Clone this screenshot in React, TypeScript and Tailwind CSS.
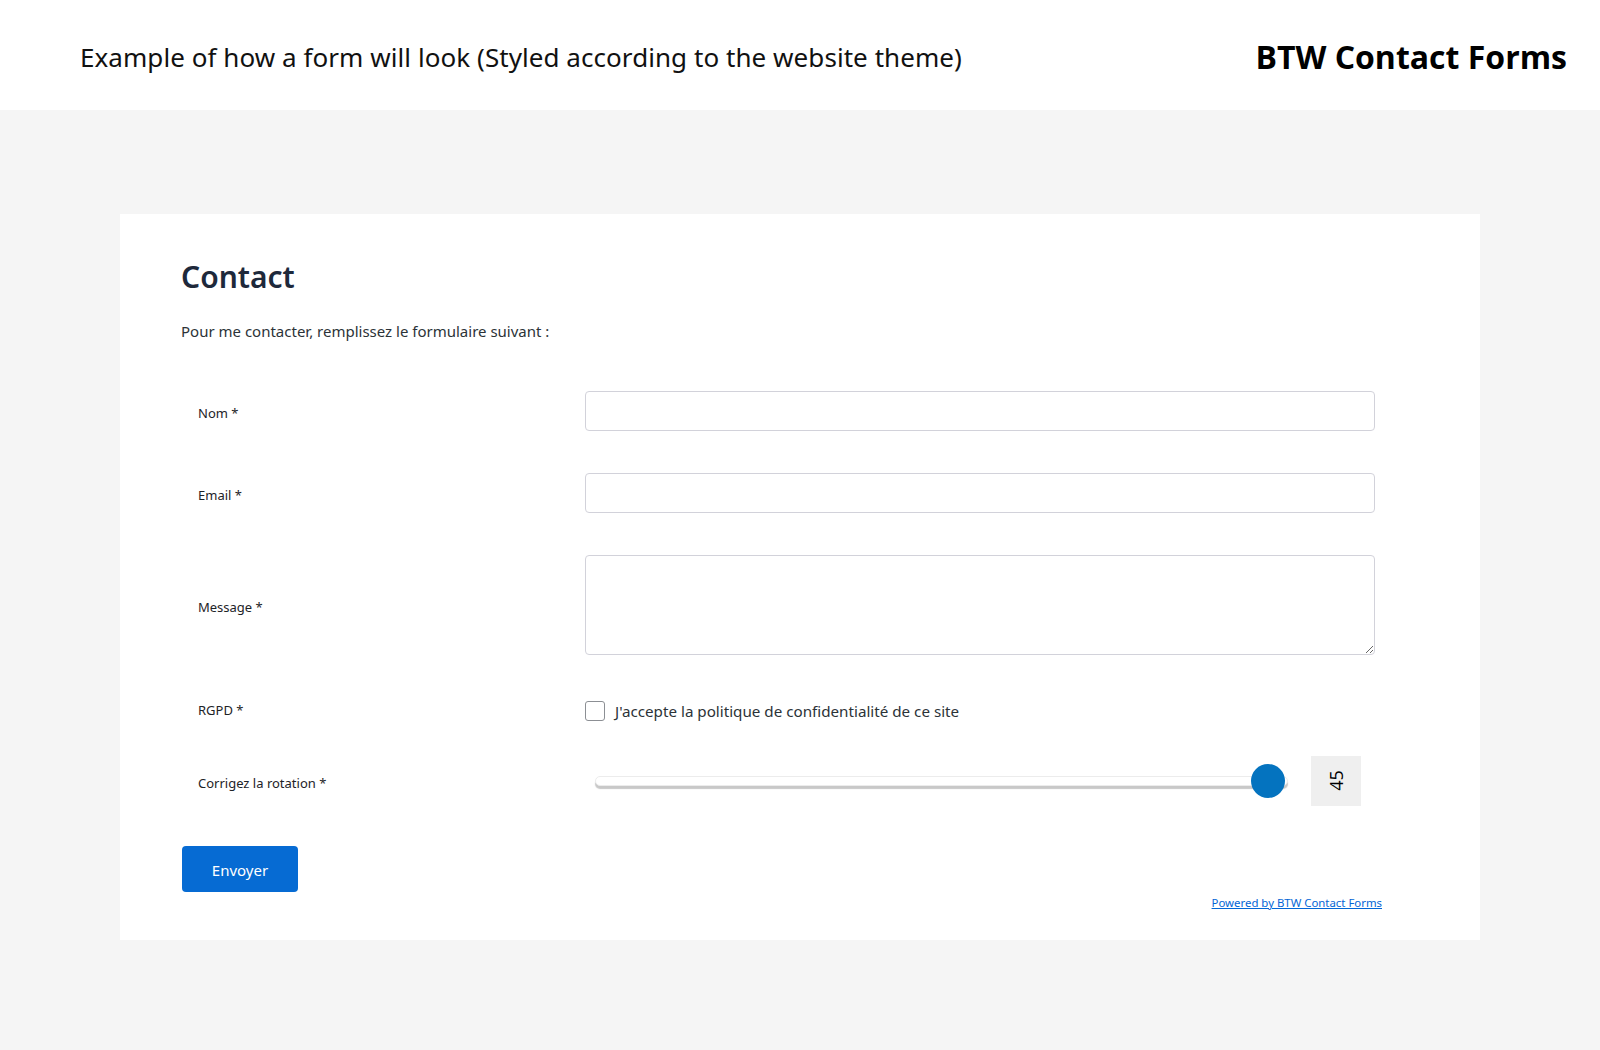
import { useState } from "react";

const fields = [
  { label: "Nom *", type: "input" },
  { label: "Email *", type: "input" },
  { label: "Message *", type: "textarea" },
];

function Field({ label, type }: { label: string; type: string }) {
  return (
    <div className="grid grid-cols-[400px_800px] items-center mb-[42px]">
      <label className="pl-[18px] pt-[6px] text-[13px] text-[#1d2327]">{label}</label>
      <div className="px-[5px]">
        {type === "textarea" ? (
          <textarea className="block w-full h-[100px] border border-[#d2d2da] rounded-[4px] bg-white resize-y" />
        ) : (
          <input className="block w-full h-[40px] border border-[#d2d2da] rounded-[4px] bg-white" />
        )}
      </div>
    </div>
  );
}

export default function App() {
  const [rotation] = useState(45);

  return (
    <div className="min-h-[1050px] bg-[#f5f5f5] font-['Noto_Sans',sans-serif]">
      <header className="h-[110px] bg-white flex items-center justify-between pl-[80px] pr-[33px] pt-[4px]">
        <p className="text-[26px] text-[#111] tracking-[0.06px]">
          Example of how a form will look (Styled according to the website theme)
        </p>
        <h1 className="text-[32px] font-bold text-black font-['Open_Sans',sans-serif]">BTW Contact Forms</h1>
      </header>

      <main className="pt-[104px] pb-[110px]">
        <div className="w-[85%] mx-auto bg-white px-[60px] pt-[44px] pb-[29px]">
          <div className="w-[1200px]">
            <h2 className="text-[30px] leading-[38px] font-semibold text-[#1e293b] pl-[1px]">Contact</h2>
            <p className="mt-[24px] text-[15px] leading-[22px] text-[#2c3338] pl-[1px]">
              Pour me contacter, remplissez le formulaire suivant :
            </p>

            <form className="mt-[49px]" onSubmit={(e) => e.preventDefault()}>
              {fields.map((f) => (
                <Field key={f.label} label={f.label} type={f.type} />
              ))}

              <div className="grid grid-cols-[400px_800px] items-start mb-[33px] pt-[3px]">
                <label className="pl-[18px] pt-[1px] text-[13px] leading-[18px] text-[#1d2327]">RGPD *</label>
                <label className="px-[5px] flex items-center gap-[10px] text-[15.2px] text-[#2c3338]">
                  <span className="w-[20px] h-[20px] border border-[#8c8f94] rounded-[3px] bg-white shrink-0" />
                  J'accepte la politique de confidentialité de ce site
                </label>
              </div>

              <div className="grid grid-cols-[400px_800px] items-center mb-[40px]">
                <label className="pl-[18px] pt-[5px] text-[13px] text-[#1d2327]">Corrigez la rotation *</label>
                <div className="flex items-center pl-[15px]">
                  <div className="relative w-[693px] h-[10px] rounded-full bg-white border border-[#ececec] shadow-[0_3px_1px_#c8c8c8]">
                    <span className="absolute right-[2px] top-1/2 -translate-y-1/2 w-[34px] h-[34px] rounded-full bg-[#0473bf]" />
                  </div>
                  <div className="ml-[23px] w-[50px] h-[50px] bg-[#efefef] flex items-center justify-center">
                    <span className="-rotate-90 text-[18px] text-black font-['Open_Sans',sans-serif]">{rotation}</span>
                  </div>
                </div>
              </div>

              <div className="flex items-start justify-between">
                <button
                  type="submit"
                  className="ml-[2px] w-[116px] h-[46px] pt-[3px] rounded-[4px] bg-[#066bd3] text-white text-[15px]"
                >
                  Envoyer
                </button>
                <a href="#" className="mt-[48px] mr-[-2px] text-[11.4px] text-[#0366d6] underline">
                  Powered by BTW Contact Forms
                </a>
              </div>
            </form>
          </div>
        </div>
      </main>
    </div>
  );
}
